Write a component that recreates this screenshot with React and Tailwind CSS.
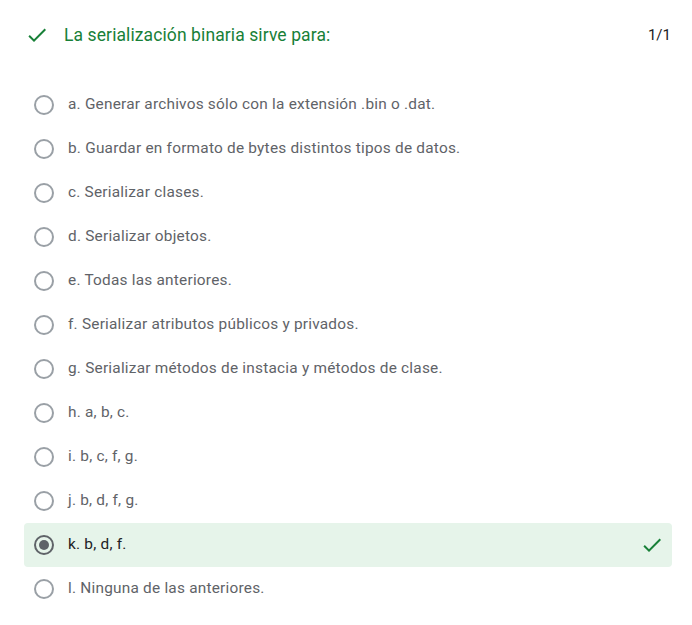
import React from "react";

const options = [
  "a. Generar archivos sólo con la extensión .bin o .dat.",
  "b. Guardar en formato de bytes distintos tipos de datos.",
  "c. Serializar clases.",
  "d. Serializar objetos.",
  "e. Todas las anteriores.",
  "f. Serializar atributos públicos y privados.",
  "g. Serializar métodos de instacia y métodos de clase.",
  "h. a, b, c.",
  "i. b, c, f, g.",
  "j. b, d, f, g.",
  "k. b, d, f.",
  "l. Ninguna de las anteriores.",
];

const selected = 10;

function Check({ className }) {
  return (
    <svg viewBox="0 0 24 24" className={className} fill="currentColor">
      <path d="M9 16.17L4.83 12l-1.42 1.41L9 19 21 7l-1.41-1.41z" />
    </svg>
  );
}

function Radio({ checked }) {
  if (checked) {
    return (
      <div className="w-5 h-5 rounded-full border-2 border-[#5f6368] flex items-center justify-center shrink-0">
        <div className="w-2.5 h-2.5 rounded-full bg-[#5f6368]" />
      </div>
    );
  }
  return <div className="w-5 h-5 rounded-full border-2 border-[#9aa0a6] shrink-0" />;
}

export default function App() {
  return (
    <div className="w-[692px] h-[625px] bg-white font-['Roboto',sans-serif]">
      {/* header */}
      <div className="flex items-center h-[44px] mt-[13px] pl-[25px] pr-[21px]">
        <Check className="w-6 h-6 text-[#188038]" />
        <div className="ml-[15px] text-[17.5px] text-[#188038] tracking-[0.1px]">
          La serialización binaria sirve para:
        </div>
        <div className="ml-auto text-[15px] text-[#202124]">1/1</div>
      </div>

      {/* options */}
      <div className="mt-[26px] pl-6 pr-5">
        {options.map((opt, i) => {
          const isSel = i === selected;
          return (
            <div
              key={opt}
              className={
                "flex items-center h-[44px] pl-[10px] pr-2 rounded " +
                (isSel ? "bg-[#e6f4ea]" : "")
              }
            >
              <Radio checked={isSel} />
              <span
                className={
                  "ml-[14px] text-[15.4px] tracking-[0.22px] " +
                  (isSel ? "text-[#202124]" : "text-[#5f6368]")
                }
              >
                {opt}
              </span>
              {isSel && <Check className="ml-auto w-6 h-6 text-[#188038]" />}
            </div>
          );
        })}
      </div>
    </div>
  );
}
